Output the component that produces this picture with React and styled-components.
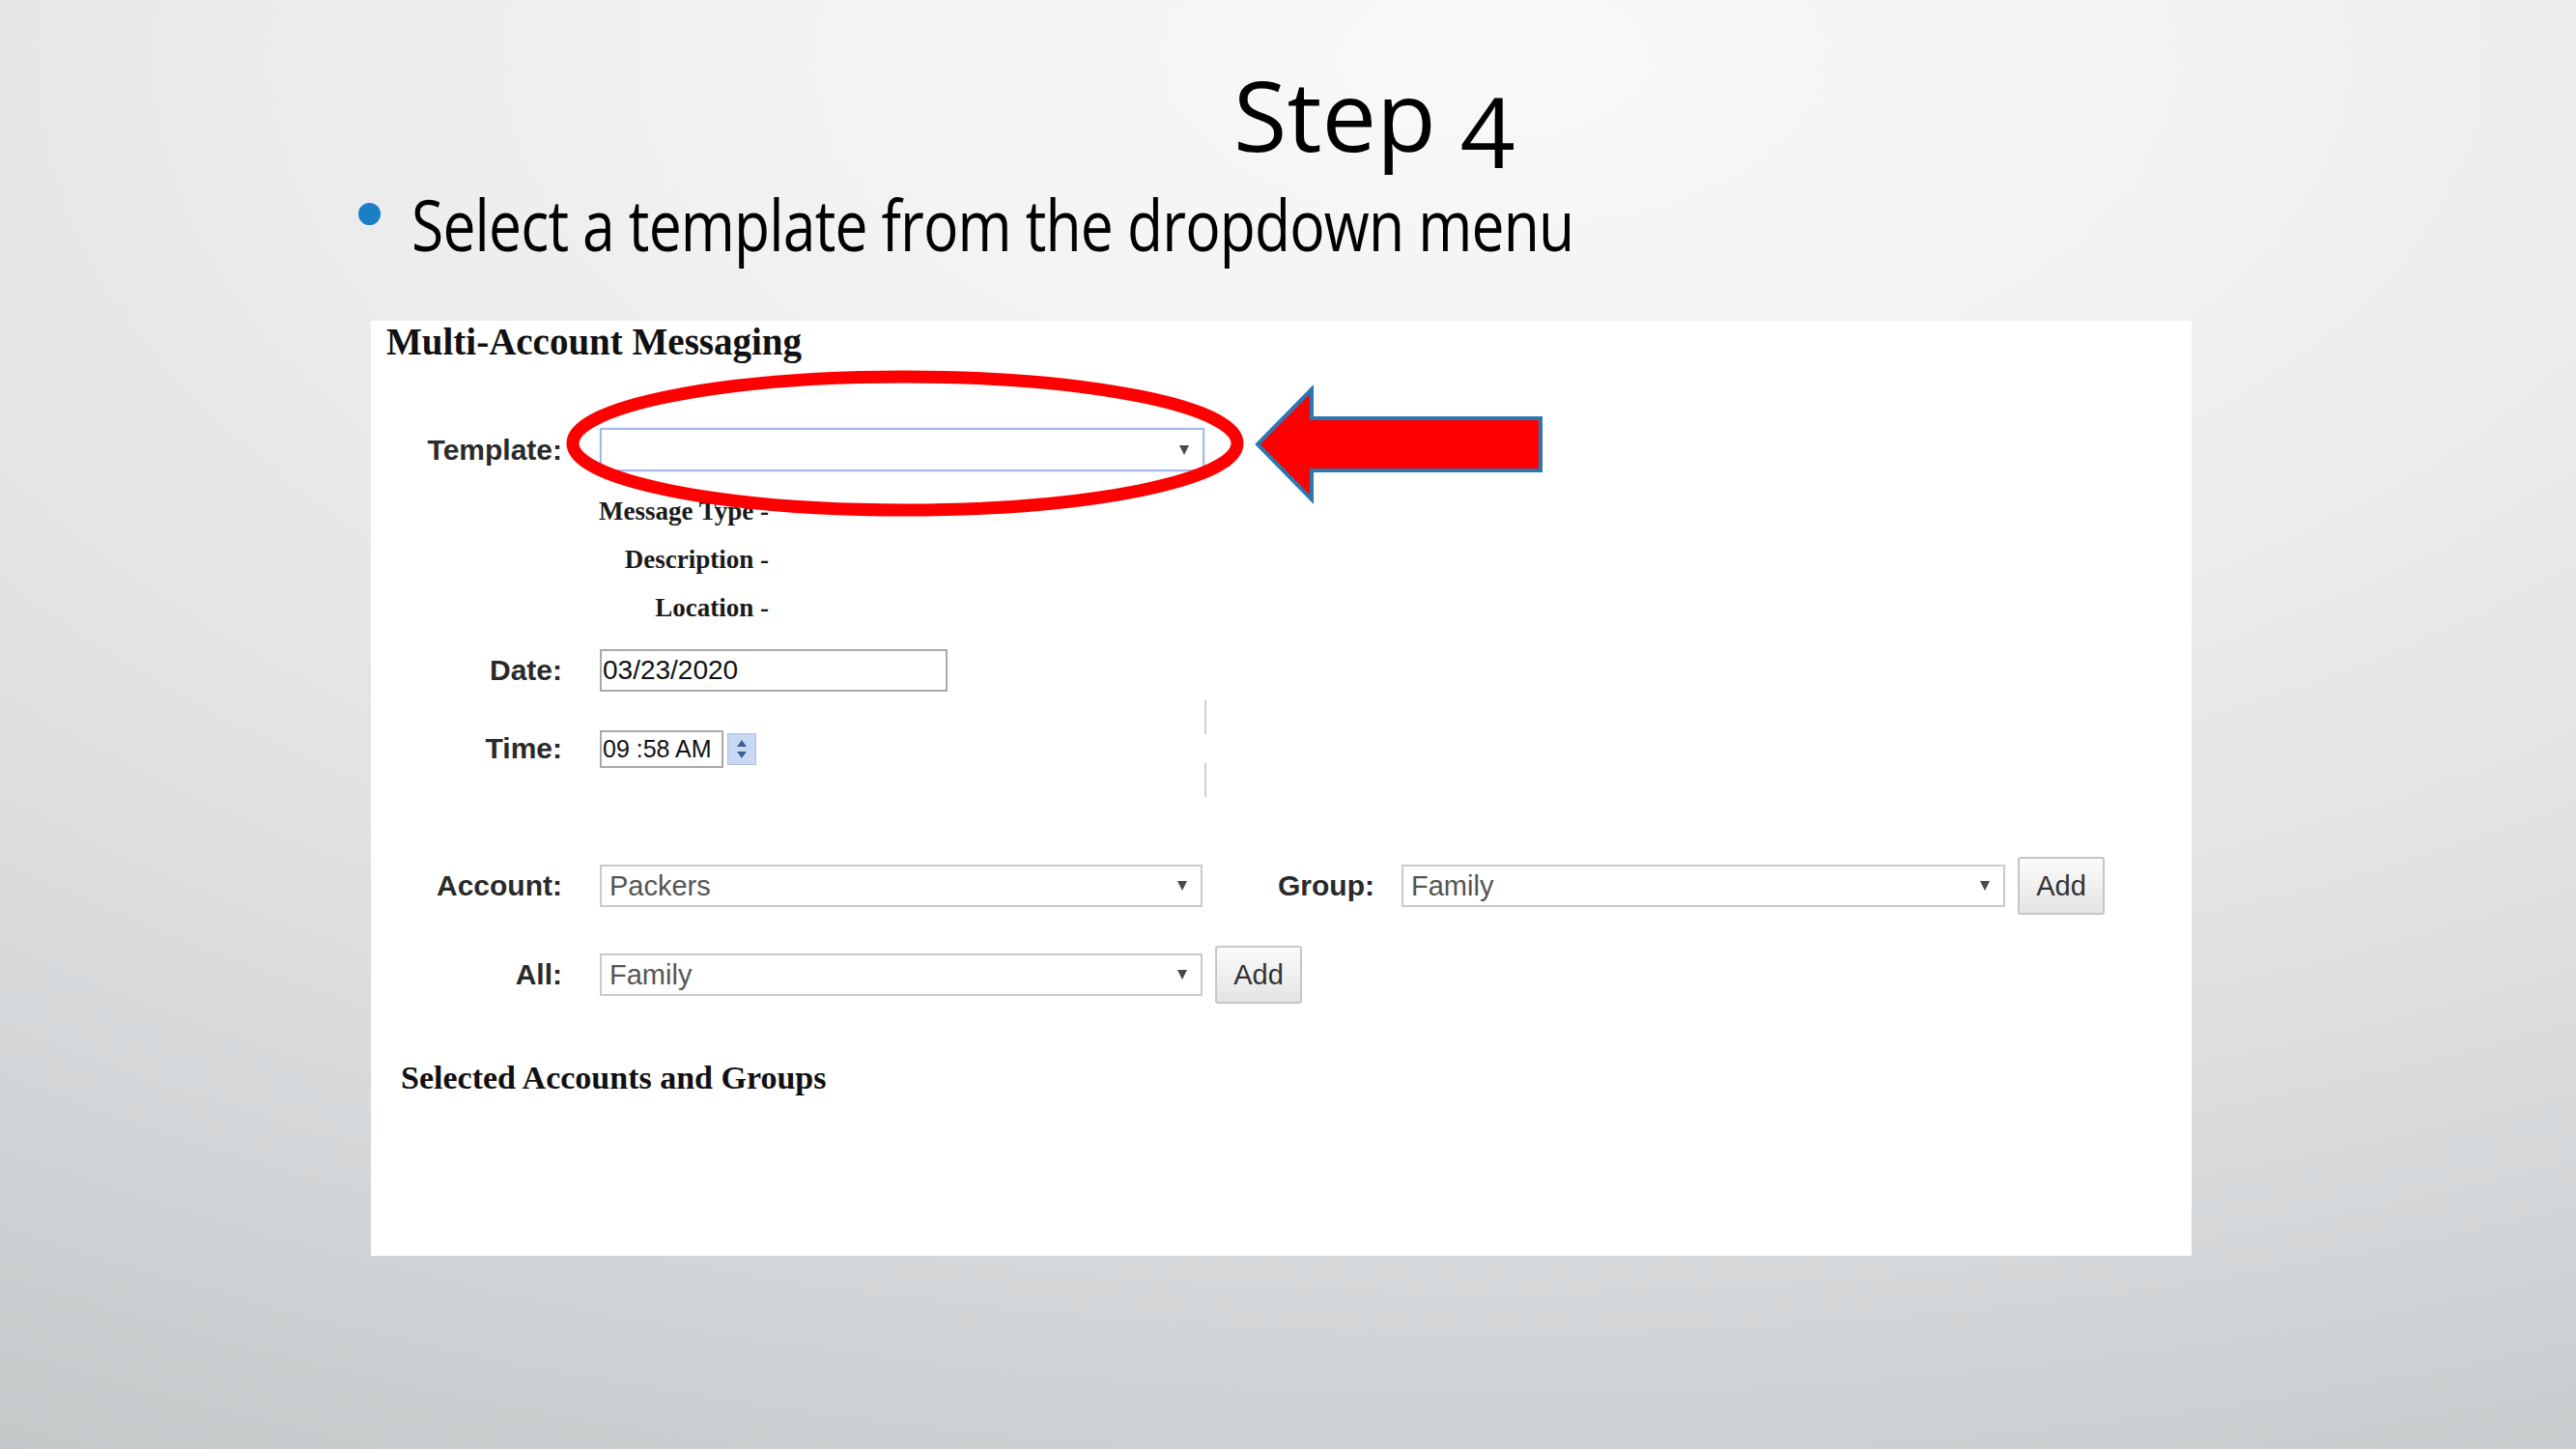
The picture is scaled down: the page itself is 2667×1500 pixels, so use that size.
import styled, { createGlobalStyle } from "styled-components";

const GlobalStyle = createGlobalStyle`
  html, body {
    margin: 0;
    padding: 0;
  }
  body {
    width: 2667px;
    height: 1500px;
    overflow: hidden;
  }
`;

const Slide = styled.div`
  width: 2667px;
  height: 1500px;
  box-sizing: border-box;
  padding-top: 66px;
  display: flex;
  flex-direction: column;
  background: radial-gradient(
    ellipse 125% 115% at 58% 4%,
    #f9f9f9 0%,
    #f0f0f1 28%,
    #e2e3e5 55%,
    #d0d3d5 80%,
    #c1c5c6 100%
  );
`;

const Title = styled.h1`
  margin: 0;
  padding-left: 1277px;
  font-family: "Open Sans", "Noto Sans", sans-serif;
  font-weight: 400;
  font-size: 101px;
  line-height: 104px;
  color: #000;
  font-variant-numeric: oldstyle-nums;
`;

const Bullet = styled.div`
  display: flex;
  align-items: flex-start;
  gap: 32px;
  margin: 25px 0 0 371px;
  font-family: "Open Sans", "Noto Sans", sans-serif;
  font-size: 73px;
  line-height: 73px;
  color: #000;
`;

const Dot = styled.span`
  flex: none;
  width: 23px;
  height: 23px;
  margin-top: 15px;
  border-radius: 50%;
  background: #1b7fc7;
`;

// the line is set condensed, narrower than the title face
const BulletText = styled.span`
  display: inline-block;
  white-space: nowrap;
  letter-spacing: -1px;
  transform: scaleX(0.83);
  transform-origin: left center;
`;

const Panel = styled.section`
  position: relative;
  width: 1885px;
  height: 968px;
  box-sizing: border-box;
  margin: 64px 0 0 384px;
  padding: 2px 16px 0;
  background: #fff;
`;

const Heading = styled.h2`
  margin: 0;
  font-family: "Liberation Serif", "Times New Roman", serif;
  font-weight: 700;
  font-size: ${(p) => p.$size}px;
  line-height: ${(p) => p.$size}px;
  color: #111;
  margin-left: ${(p) => p.$indent || 0}px;
  margin-top: ${(p) => p.$top || 0}px;
`;

const Row = styled.div`
  display: flex;
  align-items: center;
  height: ${(p) => p.$height}px;
  margin-top: ${(p) => p.$top}px;
`;

const Label = styled.span`
  flex: none;
  width: ${(p) => p.$width || 182}px;
  margin-right: ${(p) => p.$gap ?? 39}px;
  margin-left: ${(p) => p.$left || 0}px;
  text-align: right;
  font-family: "Liberation Sans", Arial, sans-serif;
  font-weight: 700;
  font-size: 30px;
  color: #2a2a2a;
`;

const Select = styled.div`
  flex: none;
  display: flex;
  align-items: center;
  justify-content: space-between;
  box-sizing: border-box;
  width: ${(p) => p.$width}px;
  height: ${(p) => (p.$focus ? 45 : 44)}px;
  padding: 0 14px 0 8px;
  background: #fff;
  border: 2px solid ${(p) => (p.$focus ? "#a3b9e9" : "#cacaca")};
  box-shadow: ${(p) => (p.$focus ? "0 0 2px #c9d7f4" : "none")};
  font-family: "Liberation Sans", Arial, sans-serif;
  font-size: 29px;
  color: #555;
`;

const Caret = styled.span`
  width: 0;
  height: 0;
  border-left: 5px solid transparent;
  border-right: 5px solid transparent;
  border-top: 10px solid #4a4a4a;
`;

const TextInput = styled.input`
  flex: none;
  box-sizing: border-box;
  width: ${(p) => p.$width}px;
  height: ${(p) => p.$height}px;
  margin: 0;
  padding: 0 0 0 1px;
  border: 2px solid #a9a9a9;
  border-radius: 0;
  background: #fff;
  font-family: "Liberation Sans", Arial, sans-serif;
  font-size: ${(p) => p.$font}px;
  color: #111;
  outline: none;
`;

const Spinner = styled.div`
  flex: none;
  display: flex;
  flex-direction: column;
  align-items: center;
  justify-content: center;
  gap: 5px;
  width: 30px;
  height: 33px;
  margin-left: 4px;
  box-sizing: border-box;
  background: #c9d8f3;
  border: 1px solid #aebfe4;
`;

const SpinArrow = styled.span`
  width: 0;
  height: 0;
  border-left: 5px solid transparent;
  border-right: 5px solid transparent;
  ${(p) => (p.$up ? "border-bottom" : "border-top")}: 7px solid #3d5f99;
`;

const Ticks = styled.div`
  display: flex;
  flex-direction: column;
  gap: 30px;
  margin-left: 464px;
`;

const Tick = styled.span`
  width: 2px;
  height: 35px;
  background: #cfcfcf;
`;

const Button = styled.button`
  flex: none;
  width: 90px;
  height: 60px;
  margin-left: 13px;
  padding: 0;
  box-sizing: border-box;
  border: 2px solid #c6c6c6;
  border-radius: 3px;
  background: linear-gradient(#fbfbfb, #e4e4e4);
  font-family: "Liberation Sans", Arial, sans-serif;
  font-size: 29px;
  color: #333;
`;

const Info = styled.div`
  width: 396px;
  margin-top: 16px;
  text-align: right;
  font-family: "Liberation Serif", "Times New Roman", serif;
  font-weight: 700;
  font-size: 27px;
  line-height: 50px;
  color: #1a1a1a;
`;

const Markup = styled.svg`
  position: absolute;
  left: 0;
  top: 0;
  width: 1300px;
  height: 260px;
  overflow: visible;
  pointer-events: none;
`;

function Dropdown({ value, width = 624, focus }) {
  return (
    <Select $width={width} $focus={focus}>
      <span>{value}</span>
      <Caret />
    </Select>
  );
}

export default function App() {
  return (
    <>
      <GlobalStyle />
      <Slide>
        <Title>Step 4</Title>
        <Bullet>
          <Dot />
          <BulletText>Select a template from the dropdown menu</BulletText>
        </Bullet>

        <Panel>
          <Heading $size={39}>Multi-Account Messaging</Heading>

          <Row $height={45} $top={70}>
            <Label>Template:</Label>
            <Dropdown value="" width={626} focus />
          </Row>

          <Info>
            <div>Message Type -</div>
            <div>Description -</div>
            <div>Location -</div>
          </Info>

          <Row $height={44} $top={18}>
            <Label>Date:</Label>
            <TextInput $width={360} $height={44} $font={28} readOnly value="03/23/2020" />
          </Row>

          <Row $height={110} $top={4}>
            <Label>Time:</Label>
            <TextInput $width={128} $height={39} $font={25} readOnly value="09 :58 AM" />
            <Spinner>
              <SpinArrow $up />
              <SpinArrow />
            </Spinner>
            <Ticks>
              <Tick />
              <Tick />
            </Ticks>
          </Row>

          <Row $height={60} $top={57}>
            <Label>Account:</Label>
            <Dropdown value="Packers" />
            <Label $width={99} $gap={29} $left={78}>
              Group:
            </Label>
            <Dropdown value="Family" width={625} />
            <Button type="button">Add</Button>
          </Row>

          <Row $height={60} $top={32}>
            <Label>All:</Label>
            <Dropdown value="Family" />
            <Button type="button">Add</Button>
          </Row>

          <Heading $size={34} $indent={15} $top={60}>
            Selected Accounts and Groups
          </Heading>

          <Markup viewBox="0 0 1300 260">
            <ellipse cx="553" cy="127" rx="344" ry="69" fill="none" stroke="#ff0000" strokeWidth="13" />
            <polygon
              points="918,128 974,71 974,101 1211,101 1211,155 974,155 974,185"
              fill="#ff0000"
              stroke="#2b77b1"
              strokeWidth="4"
              strokeLinejoin="miter"
            />
          </Markup>
        </Panel>
      </Slide>
    </>
  );
}
